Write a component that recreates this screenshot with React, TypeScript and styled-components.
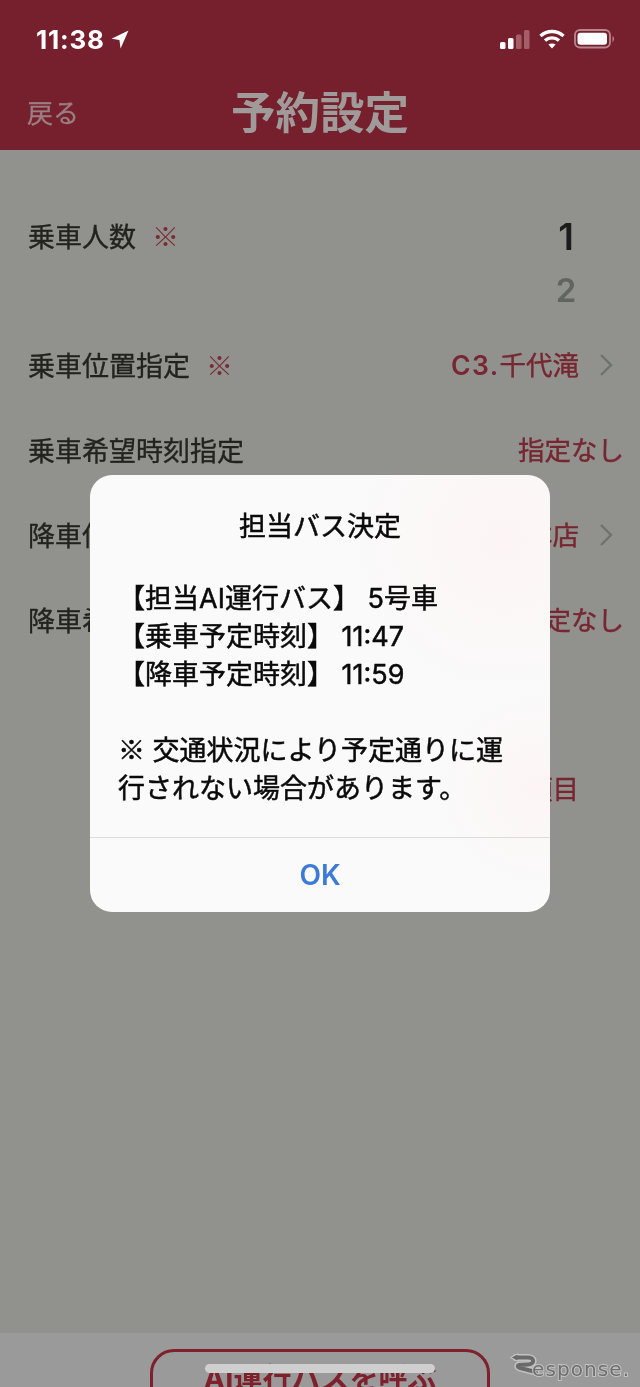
import React from "react";
import styled, { createGlobalStyle } from "styled-components";

const Global = createGlobalStyle`
  html, body { margin: 0; padding: 0; background: #91928d; }
  body { font-family: Inter, "Noto Sans CJK JP", "Noto Sans", sans-serif; }
`;

const Screen = styled.div`
  position: relative;
  width: 640px;
  height: 1387px;
  overflow: hidden;
  display: flex;
  flex-direction: column;
  background: #91928d;
  filter: blur(0.35px);
`;

const Header = styled.header`
  height: 150px;
  flex: none;
  background: #75202c;
  display: flex;
  flex-direction: column;
`;

const StatusBar = styled.div`
  height: 78px;
  padding: 0 25px 0 36px;
  display: flex;
  align-items: center;
  justify-content: space-between;
  color: #fff;
`;

const TimeGroup = styled.div`
  display: flex;
  align-items: center;
  gap: 6px;
`;

const Time = styled.span`
  font-size: 26px;
  font-weight: 700;
  letter-spacing: 0.8px;
`;

const StatusIcons = styled.div`
  display: flex;
  align-items: center;
  gap: 9px;
`;

const NavBar = styled.div`
  flex: 1;
  position: relative;
  display: flex;
  align-items: center;
  justify-content: center;
  padding-bottom: 2px;
`;

const Back = styled.span`
  position: absolute;
  left: 27px;
  top: 16px;
  font-size: 26px;
  line-height: 40px;
  color: #9c7e82;
  -webkit-text-stroke: 0.3px currentColor;
`;

const Title = styled.h1`
  margin: 0;
  font-size: 44.5px;
  line-height: 60px;
  font-weight: 700;
  color: #a09a9a;
`;

const Form = styled.main`
  flex: 1;
  padding: 63px 16px 0 28px;
  display: flex;
  flex-direction: column;
`;

const Row = styled.div<{ $h: number; $top?: boolean; $mt?: number }>`
  height: ${(p) => p.$h}px;
  margin-top: ${(p) => p.$mt ?? 0}px;
  display: flex;
  align-items: ${(p) => (p.$top ? "flex-start" : "center")};
  justify-content: space-between;
`;

const Label = styled.span`
  font-family: "Noto Sans CJK JP", sans-serif;
  font-size: 27px;
  line-height: 46px;
  font-weight: 400;
  color: #22221f;
  display: flex;
  gap: 16px;
  -webkit-text-stroke: 0.35px currentColor;
`;

const Mark = styled.span`
  color: #7a2a35;
  -webkit-text-stroke: 0;
`;

const ValueGroup = styled.div`
  display: flex;
  align-items: center;
  gap: 20px;
  padding-right: 11px;
`;

const Value = styled.span`
  font-size: 26.5px;
  line-height: 46px;
  font-weight: 400;
  color: #772632;
  white-space: nowrap;
  -webkit-text-stroke: 0.4px currentColor;
`;

const LatinValue = styled.span`
  font-weight: 600;
  letter-spacing: 1.4px;
  -webkit-text-stroke: 0;
`;

const ChevronSpace = styled.span`
  width: 14px;
`;

const Picker = styled.div`
  width: 60px;
  margin-right: 28px;
  display: flex;
  flex-direction: column;
  align-items: center;
`;

const PickerNum = styled.span<{ $active?: boolean }>`
  font-size: ${(p) => (p.$active ? 37 : 33)}px;
  line-height: ${(p) => (p.$active ? 47 : 60)}px;
  font-weight: 600;
  color: ${(p) => (p.$active ? "#1c1c1c" : "#62645f")};
`;

const Footer = styled.footer`
  height: 54px;
  flex: none;
  background: #9a9a9a;
  display: flex;
  justify-content: center;
  padding-top: 16px;
  box-sizing: border-box;
  overflow: hidden;
`;

const CallButton = styled.div`
  width: 340px;
  height: 76px;
  flex: none;
  box-sizing: border-box;
  border: 3px solid #7e212c;
  border-radius: 24px;
  display: flex;
  justify-content: center;
  font-size: 29px;
  line-height: 54px;
  font-weight: 700;
  color: #7e212c;
`;

const HomeBar = styled.div`
  position: absolute;
  left: 205px;
  top: 1364px;
  width: 230px;
  height: 9px;
  border-radius: 4.5px;
  background: #cfcfcf;
`;

const Watermark = styled.div`
  position: absolute;
  left: 510px;
  top: 1353px;
  width: 124px;
  height: 26px;
`;

const WatermarkText = styled.span`
  position: absolute;
  left: 22px;
  top: 4px;
  font-family: "DejaVu Sans", sans-serif;
  font-size: 20px;
  line-height: 24px;
  letter-spacing: 1.1px;
  color: #6f6f6f;
  -webkit-text-stroke: 2px #c2c2c2;
  paint-order: stroke fill;
`;

const Dialog = styled.div`
  position: absolute;
  left: 90px;
  top: 475px;
  width: 460px;
  height: 437px;
  border-radius: 22px;
  overflow: hidden;
  display: flex;
  flex-direction: column;
  background:
    radial-gradient(circle at 90% 15%, #fdf5f5 0, transparent 28%),
    radial-gradient(circle at 97% 72%, #fdf5f5 0, transparent 18%),
    #fafafa;
  color: #0a0a0a;
`;

const DialogBody = styled.div`
  height: 363px;
  flex: none;
  box-sizing: border-box;
  padding: 31px 28px 0;
  border-bottom: 1px solid #dcdcdc;
`;

const DialogTitle = styled.h2`
  margin: 0 0 32px;
  height: 42px;
  font-size: 27px;
  line-height: 42px;
  font-weight: 400;
  text-align: center;
  -webkit-text-stroke: 0.5px currentColor;
`;

const Message = styled.p`
  margin: 0;
  font-size: 27px;
  line-height: 38px;
  font-weight: 400;
  white-space: pre;
  -webkit-text-stroke: 0.5px currentColor;
`;

const RefMark = styled.span`
  font-family: "Noto Sans CJK JP", sans-serif;
  line-height: 1;
`;

const OkButton = styled.div`
  flex: 1;
  display: flex;
  align-items: center;
  justify-content: center;
  font-size: 28px;
  font-weight: 600;
  color: #3d7bd6;
`;

const LocationIcon = () => (
  <svg width="18" height="19" viewBox="0 0 18 19">
    <path d="M17.5 0.5 L0.5 8.8 L8.4 10 L9.6 18.5 Z" fill="#fff" />
  </svg>
);

const Signal = () => (
  <svg width="30" height="19" viewBox="0 0 30 19">
    <rect x="0" y="12" width="5.5" height="7" rx="1.5" fill="#fff" />
    <rect x="8" y="8" width="5.5" height="11" rx="1.5" fill="#fff" />
    <rect x="16" y="4.5" width="5.5" height="14.5" rx="1.5" fill="#a35e68" />
    <rect x="24" y="0" width="5.5" height="19" rx="1.5" fill="#a35e68" />
  </svg>
);

const Wifi = () => (
  <svg width="26" height="20" viewBox="0 0 26 20" fill="none" stroke="#fff" strokeWidth="3.4">
    <path d="M1.5 7 C8 1 18 1 24.5 7" />
    <path d="M6 11.5 C10 8 16 8 20 11.5" />
    <path d="M13 19.5 L9.4 15.6 C11.4 14 14.6 14 16.6 15.6 Z" fill="#fff" stroke="none" />
  </svg>
);

const Battery = () => (
  <svg width="41" height="20" viewBox="0 0 41 20">
    <rect x="1" y="1" width="35" height="17.5" rx="5" fill="none" stroke="#b8868d" strokeWidth="1.8" />
    <rect x="3.5" y="3.8" width="29.5" height="12" rx="3" fill="#fff" />
    <path d="M38.5 7 C40.5 7.8 40.5 12 38.5 13 Z" fill="#b8868d" />
  </svg>
);

const Chevron = () => (
  <svg width="14" height="24" viewBox="0 0 14 24" fill="none" stroke="#70726d" strokeWidth="2.4">
    <path d="M2 2 L12 12 L2 22" />
  </svg>
);

const logoStroke = "M6 4.5 L17 4.5 C25 4.5 25 11 18 11.5 L9 12 C7 13 8 14.5 10 15 L26 19";

const LogoMark = () => (
  <svg width="30" height="26" viewBox="0 0 30 26" fill="none" strokeLinecap="round" strokeLinejoin="round">
    <path d={logoStroke} stroke="#c2c2c2" strokeWidth="7" />
    <path d="M0.5 4.5 L8 0.8 L8 8.2 Z" fill="#6a6a6a" stroke="#c2c2c2" strokeWidth="1.2" />
    <path d={logoStroke} stroke="#6a6a6a" strokeWidth="4" />
  </svg>
);

export default function App() {
  return (
    <Screen>
      <Global />
      <Header>
        <StatusBar>
          <TimeGroup>
            <Time>11:38</Time>
            <LocationIcon />
          </TimeGroup>
          <StatusIcons>
            <Signal />
            <Wifi />
            <Battery />
          </StatusIcons>
        </StatusBar>
        <NavBar>
          <Back>戻る</Back>
          <Title>予約設定</Title>
        </NavBar>
      </Header>
      <Form>
        <Row $h={109} $top>
          <Label>
            乗車人数<Mark>※</Mark>
          </Label>
          <Picker>
            <PickerNum $active>1</PickerNum>
            <PickerNum>2</PickerNum>
          </Picker>
        </Row>
        <Row $h={85}>
          <Label>
            乗車位置指定<Mark>※</Mark>
          </Label>
          <ValueGroup>
            <Value>
              <LatinValue>C3.</LatinValue>千代滝
            </Value>
            <Chevron />
          </ValueGroup>
        </Row>
        <Row $h={85}>
          <Label>乗車希望時刻指定</Label>
          <Value>指定なし</Value>
        </Row>
        <Row $h={85}>
          <Label>
            降車位置指定<Mark>※</Mark>
          </Label>
          <ValueGroup>
            <Value>本店</Value>
            <Chevron />
          </ValueGroup>
        </Row>
        <Row $h={85}>
          <Label>降車希望時刻指定</Label>
          <Value>指定なし</Value>
        </Row>
        <Row $h={86} $mt={84}>
          <span />
          <ValueGroup>
            <Value>項目</Value>
            <ChevronSpace />
          </ValueGroup>
        </Row>
      </Form>
      <Footer>
        <CallButton>AI運行バスを呼ぶ</CallButton>
      </Footer>
      <HomeBar />
      <Watermark>
        <LogoMark />
        <WatermarkText>esponse.</WatermarkText>
      </Watermark>
      <Dialog>
        <DialogBody>
          <DialogTitle>担当バス決定</DialogTitle>
          <Message>
            {`【担当AI運行バス】 5号車
【乗車予定時刻】 11:47
【降車予定時刻】 11:59

`}
            <RefMark>※</RefMark>
            {` 交通状況により予定通りに運
行されない場合があります。`}
          </Message>
        </DialogBody>
        <OkButton>OK</OkButton>
      </Dialog>
    </Screen>
  );
}
